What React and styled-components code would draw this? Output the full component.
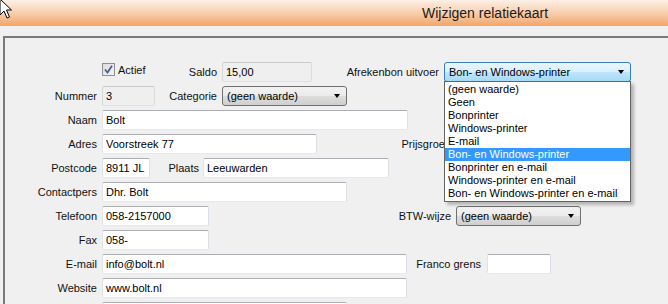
import React from 'react';
import styled, { createGlobalStyle } from 'styled-components';

const GlobalStyle = createGlobalStyle`
  html, body {
    margin: 0;
    padding: 0;
    background: #f0f0f0;
    overflow: hidden;
  }
  body {
    font-family: "Liberation Sans", Arial, sans-serif;
    font-size: 11px;
    color: #111;
  }
`;

// Window frame
const Page = styled.div`
  position: relative;
  width: 668px;
  height: 304px;
  overflow: hidden;
  background: #f0f0f0;
`;

const TitleBar = styled.div`
  height: 26px;
  display: flex;
  align-items: center;
  padding-left: 422px;
  background: linear-gradient(to bottom, #fdf0e6 0%, #f8cba6 55%, #f2a468 100%);
  font-size: 14px;
  color: #1a1a1a;
  box-sizing: border-box;
`;

const Panel = styled.div`
  margin-top: 10px;
  margin-left: 3px;
  border-top: 2px solid #7a7a7a;
  border-left: 2px solid #7a7a7a;
  padding-top: 24px;
  height: 400px;
`;

const Form = styled.div`
  display: flex;
  flex-direction: column;
  gap: 4px;
`;

const Row = styled.div`
  display: flex;
  align-items: center;
  height: 20px;
`;

const LabelCell = styled.div`
  width: ${p => p.$w}px;
  flex: none;
  text-align: right;
  padding-right: ${p => p.$pad ?? 5}px;
  box-sizing: border-box;
  white-space: nowrap;
  line-height: 20px;
`;

const TextBox = styled.div`
  width: ${p => p.$w}px;
  height: 20px;
  flex: none;
  box-sizing: border-box;
  padding-left: 3px;
  line-height: 18px;
  border: 1px solid;
  border-color: #abadb3 #dbdfe6 #e3e9ef #e2e3ea;
  border-radius: 2px;
  background: ${p => (p.$disabled ? '#efefef' : '#fff')};
  ${p => p.$disabled && 'border-color: #c9c9c9 #dcdcdc #e0e0e0 #d6d6d6;'}
  color: #000;
  white-space: nowrap;
  overflow: hidden;
`;

const Select = styled.div`
  position: relative;
  width: ${p => p.$w}px;
  height: 20px;
  flex: none;
  box-sizing: border-box;
  display: flex;
  align-items: center;
  justify-content: space-between;
  padding: 0 6px 0 4px;
  border: 1px solid ${p => (p.$focused ? '#3c7fb1' : '#707070')};
  border-radius: 3px;
  background: ${p =>
    p.$focused
      ? 'linear-gradient(to bottom, #eaf6fd 0%, #d9f0fc 50%, #bee6fd 51%, #a7d9f5 100%)'
      : 'linear-gradient(to bottom, #f2f2f2 0%, #ebebeb 50%, #dddddd 51%, #cfcfcf 100%)'};
  color: #000;
  white-space: nowrap;
`;

const Arrow = styled.span`
  width: 0;
  height: 0;
  border-left: 3.5px solid transparent;
  border-right: 3.5px solid transparent;
  border-top: 4px solid #000;
`;

const CheckCell = styled.label`
  width: 85px;
  flex: none;
  display: flex;
  align-items: center;
  gap: 3px;
  align-self: flex-start;
  margin-top: 1px;
`;

const CheckBox = styled.span`
  width: 13px;
  height: 13px;
  box-sizing: border-box;
  border: 1px solid #8e8f8f;
  background: linear-gradient(135deg, #dcdcdc 0%, #f4f4f4 100%);
  display: flex;
  align-items: center;
  justify-content: center;
`;

const DropList = styled.ul`
  position: absolute;
  top: 100%;
  left: -1px;
  width: 187px;
  margin: 0;
  padding: 1px 0;
  list-style: none;
  background: #fff;
  border: 1px solid #646464;
  box-sizing: border-box;
  box-shadow: 3px 3px 3px rgba(0, 0, 0, 0.25);
  z-index: 10;
`;

const DropItem = styled.li`
  height: 13px;
  line-height: 13px;
  padding-left: 3px;
  background: ${p => (p.$active ? '#3399ff' : 'transparent')};
  color: ${p => (p.$active ? '#fff' : '#000')};
  white-space: nowrap;
`;

const Cursor = styled.svg`
  position: absolute;
  left: -1px;
  top: -2px;
  z-index: 20;
`;

const options = [
  '(geen waarde)',
  'Geen',
  'Bonprinter',
  'Windows-printer',
  'E-mail',
  'Bon- en Windows-printer',
  'Bonprinter en e-mail',
  'Windows-printer en e-mail',
  'Bon- en Windows-printer en e-mail',
];

function App() {
  return (
    <Page>
      <GlobalStyle />
      <Cursor width="14" height="22" viewBox="0 0 14 22">
        <path d="M1 1 L1 17 L5 13 L8 20 L10.5 19 L7.5 12 L12.5 12 Z" fill="#fff" stroke="#000" strokeWidth="1" strokeLinejoin="round" />
      </Cursor>
      <TitleBar>Wijzigen relatiekaart</TitleBar>
      <Panel>
        <Form>
          <Row>
            <LabelCell $w={97} />
            <CheckCell>
              <CheckBox>
                <svg width="9" height="9" viewBox="0 0 9 9">
                  <path d="M1 4.5 L3.5 7.5 L8 0.8" fill="none" stroke="#4a5e90" strokeWidth="1.8" />
                </svg>
              </CheckBox>
              Actief
            </CheckCell>
            <LabelCell $w={35}>Saldo</LabelCell>
            <TextBox $w={90} $disabled>15,00</TextBox>
            <LabelCell $w={132}>Afrekenbon uitvoer</LabelCell>
            <Select $w={187} $focused>
              Bon- en Windows-printer
              <Arrow />
              <DropList>
                {options.map(o => (
                  <DropItem key={o} $active={o === 'Bon- en Windows-printer'}>{o}</DropItem>
                ))}
              </DropList>
            </Select>
          </Row>
          <Row>
            <LabelCell $w={97}>Nummer</LabelCell>
            <TextBox $w={53} $disabled>3</TextBox>
            <LabelCell $w={67}>Categorie</LabelCell>
            <Select $w={125}>
              (geen waarde)
              <Arrow />
            </Select>
          </Row>
          <Row>
            <LabelCell $w={97}>Naam</LabelCell>
            <TextBox $w={306}>Bolt</TextBox>
          </Row>
          <Row>
            <LabelCell $w={97}>Adres</LabelCell>
            <TextBox $w={215}>Voorstreek 77</TextBox>
            <LabelCell $w={139}>Prijsgroep</LabelCell>
          </Row>
          <Row>
            <LabelCell $w={97}>Postcode</LabelCell>
            <TextBox $w={48}>8911 JL</TextBox>
            <LabelCell $w={53} $pad={4}>Plaats</LabelCell>
            <TextBox $w={186}>Leeuwarden</TextBox>
          </Row>
          <Row>
            <LabelCell $w={97}>Contactpers</LabelCell>
            <TextBox $w={245}>Dhr. Bolt</TextBox>
          </Row>
          <Row>
            <LabelCell $w={97}>Telefoon</LabelCell>
            <TextBox $w={107}>058-2157000</TextBox>
            <LabelCell $w={247}>BTW-wijze</LabelCell>
            <Select $w={125}>
              (geen waarde)
              <Arrow />
            </Select>
          </Row>
          <Row>
            <LabelCell $w={97}>Fax</LabelCell>
            <TextBox $w={107}>058-</TextBox>
          </Row>
          <Row>
            <LabelCell $w={97}>E-mail</LabelCell>
            <TextBox $w={305}>info@bolt.nl</TextBox>
            <LabelCell $w={80} $pad={6}>Franco grens</LabelCell>
            <TextBox $w={64} />
          </Row>
          <Row>
            <LabelCell $w={97}>Website</LabelCell>
            <TextBox $w={305}>www.bolt.nl</TextBox>
          </Row>
          <Row>
            <LabelCell $w={97} />
            <TextBox $w={245} />
          </Row>
        </Form>
      </Panel>
    </Page>
  );
}

export default App;
